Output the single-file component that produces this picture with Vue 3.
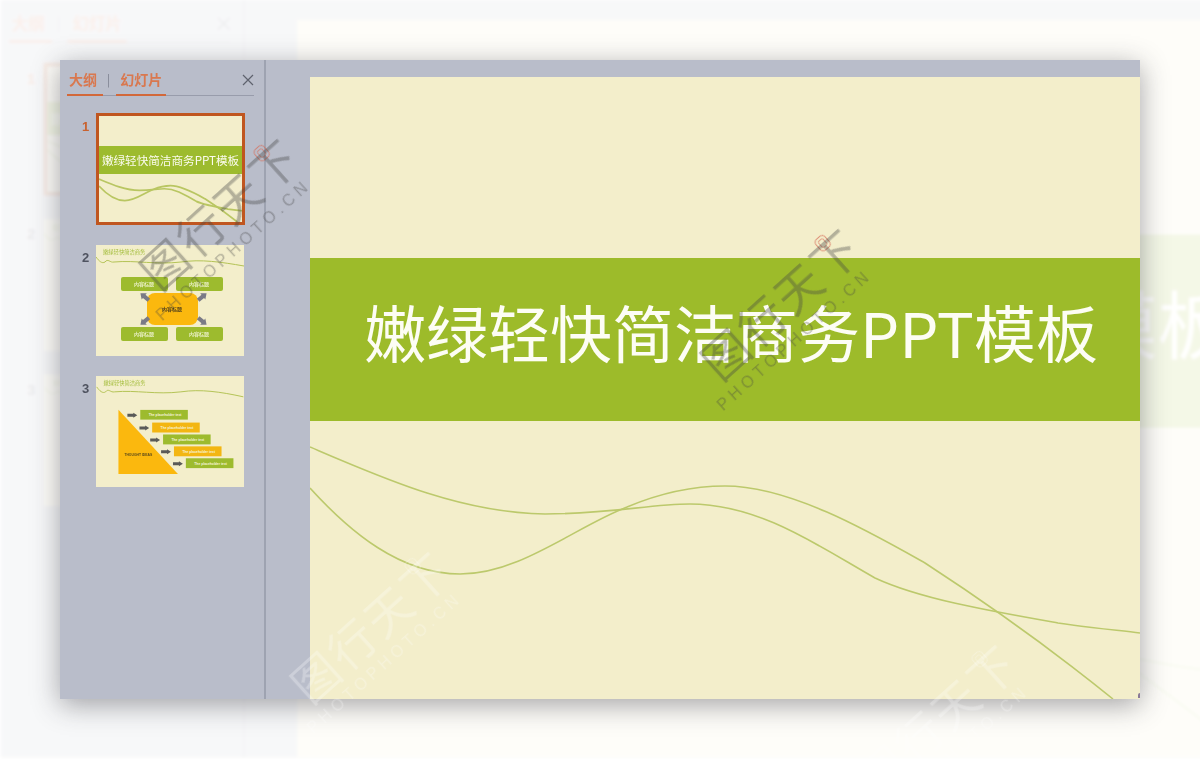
<script setup>
const layers = ['ghost', 'real']
const title = '嫩绿轻快简洁商务PPT模板'
const watermarks = ['wm-a', 'wm-b', 'wm-c', 'wm-d']
const curveA = 'M0 370C70 400 150 436 235 437C300 437 340 427 380 427C450 427 510 470 565 501C610 522 680 534 748 546C775 550 805 553 830 556'
const curveB = 'M0 411C40 455 90 497 150 497C210 497 265 450 317 430C355 414 385 409 415 409C480 409 560 455 615 486C675 525 745 575 803 622'
const steps = [
  { x: 44, y: 34, c: '#9dbb2e', t: 'The placeholder text' },
  { x: 56, y: 47, c: '#f3b612', t: 'The placeholder text' },
  { x: 67, y: 59, c: '#9dbb2e', t: 'The placeholder text' },
  { x: 78, y: 71, c: '#f3b612', t: 'The placeholder text' },
  { x: 90, y: 83, c: '#9dbb2e', t: 'The placeholder text' }
]
const boxes = [
  { x: 25, y: 32 }, { x: 80, y: 32 }, { x: 25, y: 82 }, { x: 80, y: 82 }
]
const arrows = [
  { x: 49, y: 52, r: 40 }, { x: 106, y: 52, r: 140 }, { x: 49, y: 76, r: -40 }, { x: 106, y: 76, r: -140 }
]
</script>

<template>
  <div class="page">
    <div v-for="layer in layers" :key="layer" class="window" :class="layer">
      <aside class="sidebar">
        <div class="tabs">
          <span class="tab tab-outline">大纲</span>
          <span class="sep">|</span>
          <span class="tab tab-slides">幻灯片</span>
          <svg class="close" viewBox="0 0 12 12"><path d="M1 1 11 11M11 1 1 11" /></svg>
        </div>
        <div class="thumb-row first">
          <span class="num num-1">1</span>
          <div class="thumb active">
            <div class="t-band">{{ title }}</div>
            <svg class="t-lines" viewBox="0 0 830 622" preserveAspectRatio="none">
              <path :d="curveA" />
              <path :d="curveB" />
            </svg>
          </div>
        </div>
        <div class="thumb-row">
          <span class="num">2</span>
          <div class="thumb">
            <svg class="t-art" viewBox="0 0 148 111">
              <text x="7" y="9" class="t-head">嫩绿轻快简洁商务</text>
              <path class="wave" d="M0 12C3 16 6 19 9 17C12 13 14 18 18 17C40 15 60 20 85 17C105 14 125 17 148 21" />
              <g v-for="(b, i) in boxes" :key="i">
                <rect :x="b.x" :y="b.y" width="47" height="14" rx="2" fill="#9dbb2e" />
                <text :x="b.x + 23" :y="b.y + 9" class="t-small" fill="#e9efc5">内容标题</text>
              </g>
              <rect x="51" y="48" width="51" height="32" rx="8" fill="#fbb80e" />
              <text x="76" y="66" class="t-small" fill="#55431a">内容标题</text>
              <path
                v-for="(a, i) in arrows"
                :key="'a' + i"
                class="arrow"
                d="M-6 0-1-4V-2H5V2H-1V4Z"
                :transform="`translate(${a.x} ${a.y}) rotate(${a.r})`"
              />
            </svg>
          </div>
        </div>
        <div class="thumb-row">
          <span class="num">3</span>
          <div class="thumb">
            <svg class="t-art" viewBox="0 0 148 112">
              <text x="7" y="9" class="t-head">嫩绿轻快简洁商务</text>
              <path class="wave" d="M0 11C3 15 6 18 9 16C12 12 14 17 18 16C40 14 60 19 85 16C105 13 125 16 148 21" />
              <path d="M22 34V99H82Z" fill="#fbb80e" />
              <text x="42" y="81" class="t-tiny" fill="#5a4a1a">THOUGHT IDEAS</text>
              <g v-for="(s, i) in steps" :key="i">
                <path class="step-arrow" :transform="`translate(${s.x - 13} ${s.y + 3})`" d="M0 1H6V0L10 2.5 6 5V4H0Z" />
                <rect :x="s.x" :y="s.y" width="48" height="10" :style="{ fill: s.c }" />
                <text :x="s.x + 25" :y="s.y + 6.5" class="t-tiny" fill="#f5f3d8">{{ s.t }}</text>
              </g>
            </svg>
          </div>
        </div>
      </aside>
      <main class="stage">
        <div class="slide">
          <div class="band">{{ title }}</div>
          <svg class="lines" viewBox="0 0 830 622" preserveAspectRatio="none">
            <path :d="curveA" />
            <path :d="curveB" />
          </svg>
        </div>
        <span class="corner"></span>
      </main>
    </div>
    <div v-for="w in watermarks" :key="w" class="wm" :class="w">
      <span class="wm-seal"></span>
      <span class="wm-cn">图行天下</span>
      <span class="wm-en">PHOTOPHOTO.CN</span>
    </div>
  </div>
</template>

<style scoped>
.page {
  position: relative;
  width: 1200px;
  height: 759px;
  overflow: hidden;
  background: #fff;
  font-family: "Noto Sans CJK SC", "Noto Sans", sans-serif;
}
.window {
  position: absolute;
  left: 60px;
  top: 60px;
  width: 1080px;
  height: 639px;
  display: flex;
  background: #b9bdca;
}
.real {
  box-shadow: 0 6px 26px rgba(40, 40, 50, 0.42);
}
.ghost {
  left: 1px;
  top: 0;
  transform-origin: 0 0;
  transform: scale(1.185);
  opacity: 0.11;
  filter: blur(1.4px);
}
.sidebar {
  width: 206px;
  flex: none;
  box-sizing: border-box;
  padding: 10px 10px 0 7px;
  border-right: 2px solid #9ea3b1;
}
.tabs {
  position: relative;
  display: flex;
  align-items: center;
  box-sizing: border-box;
  height: 26px;
  padding: 0 0 8px 2px;
  border-bottom: 1px solid #989cab;
  font-size: 14px;
  font-weight: 700;
  color: #d9784f;
}
.tab { line-height: 18px; }
.tab-outline::after,
.tab-slides::after {
  content: "";
  position: absolute;
  bottom: -1px;
  height: 2px;
  background: #d2683a;
}
.tab-outline::after { left: 0; width: 36px; }
.tab-slides::after { left: 49px; width: 50px; }
.sep {
  margin: 0 10px;
  font-size: 12px;
  font-weight: 400;
  color: #7d818f;
}
.close {
  position: absolute;
  right: 0;
  top: 4px;
  width: 12px;
  height: 12px;
}
.close path {
  fill: none;
  stroke: #5e626e;
  stroke-width: 1.2;
}
.thumb-row {
  display: flex;
  align-items: flex-start;
  margin-top: 20px;
}
.thumb-row.first { margin-top: 17px; }
.num {
  width: 29px;
  flex: none;
  box-sizing: border-box;
  padding: 5px 0 0 15px;
  font-family: "Liberation Sans", sans-serif;
  font-size: 13px;
  line-height: 16px;
  font-weight: 700;
  color: #4f5360;
}
.num-1 {
  padding-top: 6px;
  color: #c9622f;
}
.thumb {
  position: relative;
  width: 148px;
  height: 111px;
  background: #f3eecb;
  overflow: hidden;
}
.thumb.active {
  box-sizing: border-box;
  width: 149px;
  height: 112px;
  border: 3px solid #c0561f;
}
.t-band {
  position: absolute;
  left: 0;
  right: 0;
  top: 30px;
  height: 28px;
  background: #9dbb2e;
  color: #fbfbee;
  font-size: 11.6px;
  line-height: 28px;
  text-align: center;
  white-space: nowrap;
  filter: blur(0.35px);
}
.t-lines {
  position: absolute;
  inset: 0;
  width: 100%;
  height: 100%;
}
.t-lines path {
  fill: none;
  stroke: #b9c662;
  stroke-width: 10;
}
.t-art {
  display: block;
  width: 100%;
  height: 100%;
  filter: blur(0.35px);
}
.t-head {
  font-size: 5.3px;
  fill: #a4bd3c;
}
.wave {
  fill: none;
  stroke: #b3c255;
  stroke-width: 1;
}
.t-small {
  font-size: 5px;
  font-weight: 700;
  text-anchor: middle;
}
.t-tiny {
  font-family: "Liberation Sans", sans-serif;
  font-size: 3.4px;
  font-weight: 700;
  text-anchor: middle;
}
.arrow { fill: #7a7a86; }
.step-arrow { fill: #5a5a58; }
.stage {
  position: relative;
  flex: 1;
  display: flex;
  justify-content: flex-end;
  align-items: flex-end;
}
.slide {
  position: relative;
  width: 830px;
  height: 622px;
  background: #f3eecb;
  overflow: hidden;
}
.band {
  position: absolute;
  left: 0;
  right: 0;
  top: 181px;
  height: 163px;
  box-sizing: border-box;
  padding-left: 54px;
  background: #9dbb2a;
  color: #fdfdf4;
  font-size: 62px;
  line-height: 146px;
  white-space: nowrap;
}
.lines {
  position: absolute;
  inset: 0;
  width: 100%;
  height: 100%;
}
.lines path {
  fill: none;
  stroke: #bcc96c;
  stroke-width: 1.6;
}
.corner {
  position: absolute;
  right: 0;
  bottom: 1px;
  width: 2px;
  height: 5px;
  background: #8a7a98;
  border-radius: 2px 0 0 0;
}
.wm {
  position: absolute;
  width: 190px;
  height: 70px;
  transform: rotate(-42deg);
  color: rgba(66, 66, 66, 0.36);
}
.wm-a { left: 680px; top: 280px; }
.wm-b { left: 119px; top: 190px; }
.wm-c { left: 270px; top: 603px; color: rgba(255, 255, 255, 0.28); }
.wm-d { left: 837px; top: 696px; color: rgba(255, 255, 255, 0.28); }
.wm-cn {
  position: absolute;
  left: 9px;
  top: 3px;
  font-size: 46px;
  letter-spacing: 3px;
  line-height: 50px;
  white-space: nowrap;
}
.wm-en {
  position: absolute;
  left: -8px;
  top: 58px;
  font-family: "Liberation Sans", sans-serif;
  font-size: 16px;
  line-height: 18px;
  letter-spacing: 4.7px;
  white-space: nowrap;
}
.wm-seal {
  position: absolute;
  left: 172px;
  top: 6px;
  width: 13px;
  height: 15px;
  box-sizing: border-box;
  border: 1.5px solid rgba(214, 110, 90, 0.7);
  border-radius: 4px;
}
.wm-seal::after {
  content: "";
  position: absolute;
  inset: 2px;
  border: 1px solid rgba(214, 110, 90, 0.6);
  border-radius: 2px;
}
.wm-c .wm-seal,
.wm-d .wm-seal {
  border-color: rgba(255, 255, 255, 0.25);
}
.wm-c .wm-seal::after,
.wm-d .wm-seal::after {
  border-color: rgba(255, 255, 255, 0.2);
}
</style>
